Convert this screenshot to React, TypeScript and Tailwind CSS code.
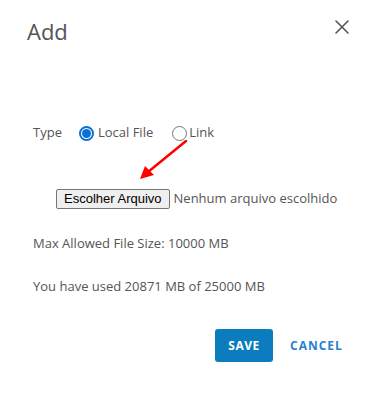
import React from "react";

const font = { fontFamily: '"Open Sans", "Noto Sans", sans-serif' };

function Radio({ checked }: { checked?: boolean }) {
  return (
    <span
      className={
        "inline-flex h-[15px] w-[15px] items-center justify-center rounded-full border bg-white " +
        (checked ? "border-[#0b6fd8] border-2" : "border-[#777]")
      }
    >
      {checked && <span className="h-[9px] w-[9px] rounded-full bg-[#0b6fd8]" />}
    </span>
  );
}

export default function App() {
  return (
    <div className="relative h-[393px] w-[372px] bg-white text-[#555]" style={font}>
      <div className="flex items-start justify-between pl-[27px] pr-[22px] pt-[16px]">
        <h1 className="text-[22px] leading-[30px] font-normal text-[#555]">Add</h1>
        <button className="mt-[3px] text-[#555]">
          <svg width="16" height="16" viewBox="0 0 16 16">
            <path d="M2 2 L14 14 M14 2 L2 14" stroke="#555" strokeWidth="1.6" strokeLinecap="round" />
          </svg>
        </button>
      </div>

      <div className="pl-[33px] pt-[77px] text-[13px]">
        <div className="flex items-center h-[20px]">
          <span>Type</span>
          <label className="ml-[17px] flex items-center gap-[4px]">
            <Radio checked />
            <span>Local File</span>
          </label>
          <label className="ml-[19px] flex items-center gap-[2px]">
            <Radio />
            <span>Link</span>
          </label>
        </div>

        <div className="mt-[46px] ml-[23px] flex items-center h-[20px]">
          <button
            className="h-[20px] rounded-[2px] border border-[#767676] bg-[#efefef] px-[7px] text-[13px] leading-[18px] text-black"
            style={{ fontFamily: '"Liberation Sans", Arial, sans-serif' }}
          >
            Escolher Arquivo
          </button>
          <span className="ml-[4px]">Nenhum arquivo escolhido</span>
        </div>

        <p className="mt-[24px] leading-[20px]">Max Allowed File Size: 10000 MB</p>
        <p className="mt-[23px] leading-[20px]">You have used 20871 MB of 25000 MB</p>
      </div>

      <div className="mt-[33px] flex items-center pl-[215px]">
        <button className="h-[33px] w-[58px] rounded-[3px] bg-[#0b7dbe] text-[12px] font-bold tracking-[0.5px] text-white">
          SAVE
        </button>
        <button className="ml-[17px] text-[12px] font-bold tracking-[1px] text-[#2a7fd4]">CANCEL</button>
      </div>

      <svg className="pointer-events-none absolute left-0 top-0" width="372" height="393">
        <line x1="186" y1="141" x2="148" y2="172" stroke="#f00" strokeWidth="2.5" strokeLinecap="round" />
        <polygon points="140,179 145,166 154,175" fill="#f00" />
      </svg>
    </div>
  );
}
